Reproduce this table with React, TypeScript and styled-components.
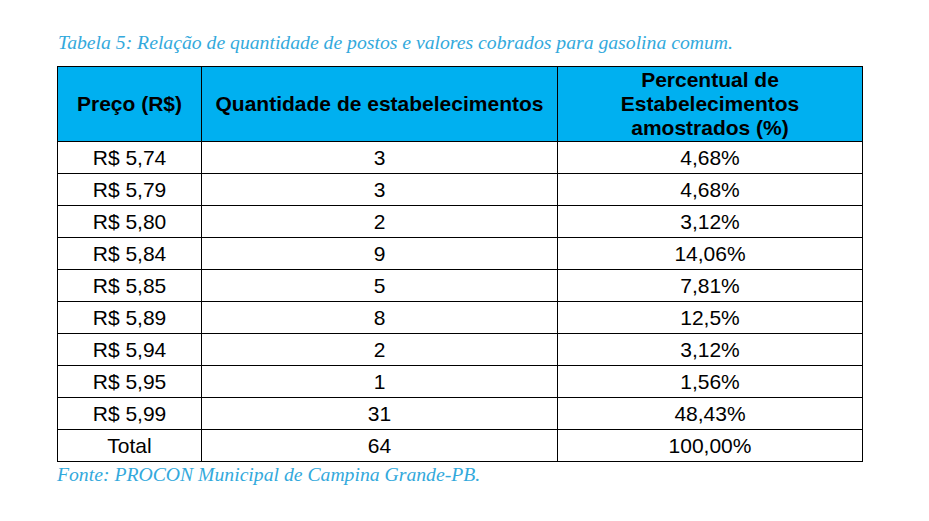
import styled, { createGlobalStyle } from "styled-components";

const GlobalStyle = createGlobalStyle`
    html, body {
        margin: 0;
        padding: 0;
        background: #ffffff;
    }
`;

const Page = styled.div`
    width: 929px;
    height: 521px;
    padding: 31px 0 0 57px;
    box-sizing: border-box;
    background: #ffffff;
`;

const Caption = styled.p`
    margin: 0 0 12px 1px;
    font-family: "Liberation Serif", "Times New Roman", serif;
    font-style: italic;
    font-size: 19.7px;
    line-height: 23px;
    color: #33a9dc;
`;

const Source = styled(Caption)`
    margin: 0;
    line-height: 24px;
`;

const Table = styled.table`
    border-collapse: collapse;
    table-layout: fixed;
    width: 805px;
    font-family: "Liberation Sans", Arial, sans-serif;
    color: #000000;
`;

const HeadCell = styled.th<{ $w: number }>`
    width: ${(p) => p.$w}px;
    height: 75px;
    padding: 0 4px;
    box-sizing: border-box;
    background: #00b0f0;
    border: 1px solid #000000;
    font-size: 21px;
    font-weight: bold;
    line-height: 24px;
    text-align: center;
    vertical-align: middle;
`;

const Cell = styled.td`
    height: 31px;
    padding: 0 4px;
    border: 1px solid #000000;
    font-size: 21px;
    line-height: 24px;
    text-align: center;
    vertical-align: middle;
`;

const rows: [string, string, string][] = [
    ["R$ 5,74", "3", "4,68%"],
    ["R$ 5,79", "3", "4,68%"],
    ["R$ 5,80", "2", "3,12%"],
    ["R$ 5,84", "9", "14,06%"],
    ["R$ 5,85", "5", "7,81%"],
    ["R$ 5,89", "8", "12,5%"],
    ["R$ 5,94", "2", "3,12%"],
    ["R$ 5,95", "1", "1,56%"],
    ["R$ 5,99", "31", "48,43%"],
    ["Total", "64", "100,00%"],
];

function App() {
    return <>
        <GlobalStyle />
        <Page>
            <Caption>Tabela 5: Relação de quantidade de postos e valores cobrados para gasolina comum.</Caption>
            <Table>
                <thead>
                    <tr>
                        <HeadCell $w={144}>Preço (R$)</HeadCell>
                        <HeadCell $w={356}>Quantidade de estabelecimentos</HeadCell>
                        <HeadCell $w={305}>Percentual de<br />Estabelecimentos<br />amostrados (%)</HeadCell>
                    </tr>
                </thead>
                <tbody>
                    {rows.map(([price, qty, pct]) => (
                        <tr key={price}>
                            <Cell>{price}</Cell>
                            <Cell>{qty}</Cell>
                            <Cell>{pct}</Cell>
                        </tr>
                    ))}
                </tbody>
            </Table>
            <Source>Fonte: PROCON Municipal de Campina Grande-PB.</Source>
        </Page>
    </>
}

export default App;
